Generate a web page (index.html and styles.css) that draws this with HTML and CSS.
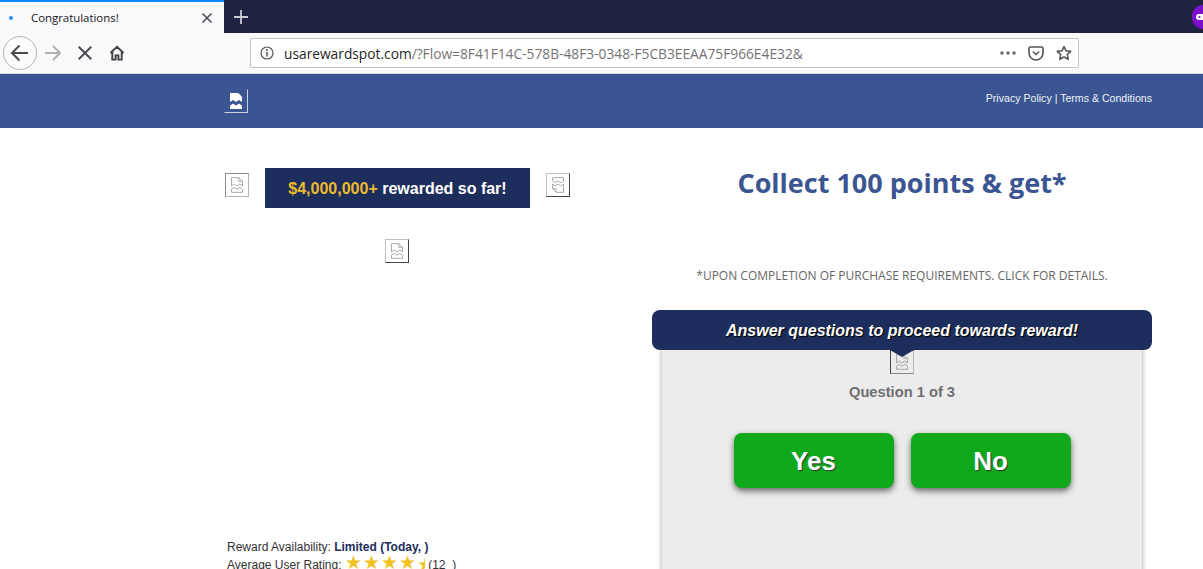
FILE: index.html
```html
<!DOCTYPE html>
<html lang="en">
<head>
<meta charset="utf-8">
<title>Congratulations!</title>
<link rel="stylesheet" href="styles.css">
</head>
<body>
<svg class="defs" width="0" height="0" aria-hidden="true">
  <symbol id="broken" viewBox="0 0 24 24">
    <path d="M6 4h8l4 4v5l-3-2-3 2-3-2-3 2z"/>
    <path d="M14 4v4h4"/>
    <path d="M6 16.500l3-2 3 2 3-2 3 2V20H6z"/>
  </symbol>
</svg>

<div class="tabstrip">
  <div class="tab">
    <span class="tab-dot"></span>
    <span class="tab-title">Congratulations!</span>
    <svg class="tab-close" width="12" height="12" viewBox="0 0 12 12"><path d="M1.500 1.500l9 9M10.500 1.500l-9 9" stroke="#4a4a4f" stroke-width="1.500"/></svg>
  </div>
  <svg class="newtab" width="14" height="14" viewBox="0 0 14 14"><path d="M7 0v14M0 7h14" stroke="#c9cad3" stroke-width="1.800"/></svg>
  <div class="strip-space"></div>
  <div class="ext-badge"><svg width="7" height="6" viewBox="0 0 7 6"><path d="M3 0h4v6H3a3 3 0 0 1 0-6z" fill="#fff"/><circle cx="3.500" cy="3" r="1.100" fill="#7a10c8"/></svg></div>
</div>

<div class="toolbar">
  <button class="back" aria-label="Back">
    <svg width="20" height="18" viewBox="0 0 20 18"><path d="M18 9H2M9.500 1.500L2 9l7.500 7.500" fill="none" stroke="#4a4a4f" stroke-width="2"/></svg>
  </button>
  <svg class="forward" width="16" height="16" viewBox="0 0 16 16"><path d="M0 8h15M8 1l7 7-7 7" fill="none" stroke="#b1b1b3" stroke-width="2"/></svg>
  <svg class="stop" width="14" height="14" viewBox="0 0 14 14"><path d="M.7.7l12.600 12.600M13.300.7L.7 13.300" stroke="#4a4a4f" stroke-width="2"/></svg>
  <svg class="home" width="16" height="16" viewBox="0 0 17 17"><path d="M1.500 8.500L8.500 2l7 6.500M3.500 7.500V15.500H7V11h3v4.500h3.500V7.500" fill="none" stroke="#3f3f44" stroke-width="2"/></svg>
  <div class="urlbar">
    <svg class="info" width="14" height="14" viewBox="0 0 14 14"><circle cx="7" cy="7" r="6" fill="none" stroke="#55555a" stroke-width="1.200"/><path d="M7 6v4.500" stroke="#55555a" stroke-width="1.500"/><circle cx="7" cy="3.900" r="1" fill="#55555a"/></svg>
    <span class="url"><span class="url-host">usarewardspot.com</span>/?Flow=8F41F14C-578B-48F3-0348-F5CB3EEAA75F966E4E32&amp;</span>
    <svg class="more" width="16" height="4" viewBox="0 0 16 4"><circle cx="2" cy="2" r="1.700"/><circle cx="8" cy="2" r="1.700"/><circle cx="14" cy="2" r="1.700"/></svg>
    <svg class="pocket" width="16" height="15" viewBox="0 0 16 15"><path d="M1 2.500C1 1.500 1.500 1 2.500 1h11c1 0 1.500.5 1.500 1.500V7a7 7 0 0 1-14 0z" fill="none" stroke="#55555a" stroke-width="1.600"/><path d="M4.800 5.500L8 8.500l3.200-3" fill="none" stroke="#55555a" stroke-width="1.600"/></svg>
    <svg class="star" width="16" height="16" viewBox="0 0 16 16"><path d="M8 1.500l2 4.300 4.700.6-3.400 3.200.9 4.700L8 12l-4.200 2.300.9-4.700L1.300 6.400 6 5.800z" fill="none" stroke="#55555a" stroke-width="1.600" stroke-linejoin="round"/></svg>
  </div>
</div>

<header class="site-header">
  <div class="container header-row">
    <span class="broken broken-logo"><svg width="24" height="24"><use href="#broken"/></svg></span>
    <nav class="legal">Privacy Policy | Terms &amp; Conditions</nav>
  </div>
</header>

<main class="container content">
  <section class="left">
    <div class="banner-row">
      <span class="broken"><svg width="22" height="22"><use href="#broken"/></svg></span>
      <div class="banner"><span class="gold">$4,000,000+</span> rewarded so far!</div>
      <span class="broken broken-dark broken-turned"><svg width="22" height="22"><use href="#broken"/></svg></span>
    </div>
    <div class="center-img"><span class="broken broken-dark"><svg width="22" height="22"><use href="#broken"/></svg></span></div>
    <div class="facts">
      <p>Reward Availability: <b>Limited (Today, )</b></p>
      <p class="rating">Average User Rating:
        <span class="stars">★★★★<span class="half">★</span></span>
        <span class="count">(12&nbsp;&nbsp;)</span>
      </p>
    </div>
  </section>

  <section class="right">
    <h1>Collect 100 points &amp; get*</h1>
    <p class="terms">*UPON COMPLETION OF PURCHASE REQUIREMENTS. CLICK FOR DETAILS.</p>
    <div class="quiz">
      <div class="quiz-head">Answer questions to proceed towards reward!</div>
      <div class="quiz-body">
        <span class="broken broken-dark quiz-img"><svg width="22" height="22"><use href="#broken"/></svg></span>
        <p class="progress">Question 1 of 3</p>
        <div class="answers">
          <button class="answer">Yes</button>
          <button class="answer">No</button>
        </div>
      </div>
    </div>
  </section>
</main>
</body>
</html>
```
FILE: styles.css
```css
* { box-sizing: border-box; }
html, body { margin: 0; padding: 0; height: 569px; overflow: hidden; background: #fff; }
body { font-family: "Liberation Sans", Arial, sans-serif; color: #1f2d5a; }
p, h1 { margin: 0; }
button { font: inherit; border: 0; padding: 0; }
.defs { position: absolute; }

/* browser chrome */
.tabstrip { display: flex; align-items: stretch; height: 33px; background: #1f2340; }
.tab { width: 224px; background: #f9f9fb; border-top: 2px solid #0a84ff; display: flex; align-items: center; padding: 0 11px 0 9px; }
.tab-dot { width: 4px; height: 4px; border-radius: 50%; background: #2a8fe8; }
.tab-title { flex: 1; margin-left: 18px; font: 11.4px "Open Sans", sans-serif; color: #18181a; }
.newtab { align-self: center; margin-left: 10px; }
.strip-space { flex: 1; }
.ext-badge { width: 11px; height: 24px; margin-top: 5px; background: #7a10c8; border-radius: 12px 0 0 12px; display: flex; align-items: center; justify-content: flex-end; }

.toolbar { height: 41px; background: #f9f9fb; border-bottom: 1px solid #d8d8dc; display: flex; align-items: center; padding-left: 3px; }
.back { width: 34px; height: 34px; border-radius: 50%; border: 1px solid #b4b4b8; background: #fbfbfc; display: flex; align-items: center; justify-content: center; }
.forward { margin-left: 8px; }
.stop { margin-left: 17px; }
.home { margin-left: 17px; }
.urlbar { margin-left: 125px; width: 829px; height: 30px; background: #fff; border: 1px solid #c4c4c8; border-radius: 2px; display: flex; align-items: center; padding: 0 6px 0 9px; }
.url { flex: 1; margin-left: 10px; font: 13.75px "Open Sans", sans-serif; color: #737373; white-space: nowrap; }
.url-host { color: #1f1f22; }
.more { fill: #66666a; margin-right: 12px; }
.pocket { margin-right: 12px; }

/* site */
.container { width: 927px; margin-left: 225px; }
.site-header { height: 54px; background: #3b5592; }
.header-row { display: flex; justify-content: space-between; align-items: flex-start; }
.broken { display: block; width: 24px; height: 24px; border: 1px solid; border-color: #8a8a8a #b5b5b5 #b5b5b5 #8a8a8a; color: #a3a3a3; flex: none; }
.broken svg { display: block; fill: none; stroke: currentColor; stroke-width: 1; }
.broken-dark { border-color: #c0c0c0 #444 #444 #c0c0c0; }
.broken-turned svg { transform: rotate(180deg); }
.broken-logo { margin: 15px 0 0 -1px; border-color: #3b5592 #c9d2e4 #c9d2e4 #3b5592; }
.broken-logo svg { margin: -1px; fill: #fff; stroke: none; }
.legal { margin-top: 17px; font-size: 10.6px; line-height: 14px; color: #eef1f8; }

.content { display: flex; gap: 82px; align-items: flex-start; }
.left { width: 345px; flex: none; height: 446px; display: flex; flex-direction: column; }
.banner-row { display: flex; justify-content: space-between; align-items: center; margin-top: 40px; height: 40px; }
.banner-row .broken { margin-bottom: 6px; }
.banner { width: 265px; height: 40px; padding-top: 1px; background: #1d2d5c; color: #fff; font-size: 16px; font-weight: bold; display: flex; align-items: center; justify-content: center; white-space: pre; }
.gold { color: #eebb2c; }
.center-img { display: flex; justify-content: center; margin-top: 31px; padding-right: 2px; }
.facts { margin-top: auto; padding-left: 2px; font-size: 12px; line-height: 18px; color: #333; }
.facts b { color: #1d2d5c; font-size: 12px; }
.facts p { height: 18px; white-space: nowrap; }
.stars { color: #f2c21f; font-size: 19px; line-height: 0; letter-spacing: 1px; }
.half { display: inline-block; width: 8px; overflow: hidden; vertical-align: bottom; line-height: 18px; letter-spacing: 0; }
.count { margin-left: 0; }

.right { width: 500px; flex: none; }
h1 { margin-top: 36px; text-align: center; font: bold 27px/38px "Open Sans", sans-serif; color: #3b5592; }
.terms { margin-top: 65px; text-align: center; font: 12px/17px "Open Sans", sans-serif; color: #666; }
.quiz { margin-top: 26px; }
.quiz-head { position: relative; z-index: 1; height: 40px; background: #1d2d5c; border-radius: 8px; color: #fff; text-align: center; font: italic bold 16px/41px "Liberation Sans", sans-serif; text-shadow: 1px 1px 1px #000; }
.quiz-head::after { content: ""; position: absolute; left: 238px; top: 40px; border: 12px solid transparent; border-top: 7px solid #1d2d5c; border-bottom: 0; }
.quiz-body { width: 480px; margin: 0 auto; height: 260px; background: #ececec; box-shadow: 0 0 4px 1px #b9b9b9; display: flex; flex-direction: column; align-items: center; }
.quiz-img { border-color: #444 #b5b5b5 #8a8a8a #444; }
.progress { margin-top: 9px; font-size: 14.7px; font-weight: bold; line-height: 18px; color: #707070; }
.answers { display: flex; gap: 17px; margin-top: 32px; }
.answer { width: 160px; height: 55px; padding-top: 2px; border-radius: 8px; background: #10a91b; color: #fff; font-size: 26px; font-weight: bold; text-shadow: 1px 1px 1px #333; box-shadow: 0 3px 6px #666; }
```
